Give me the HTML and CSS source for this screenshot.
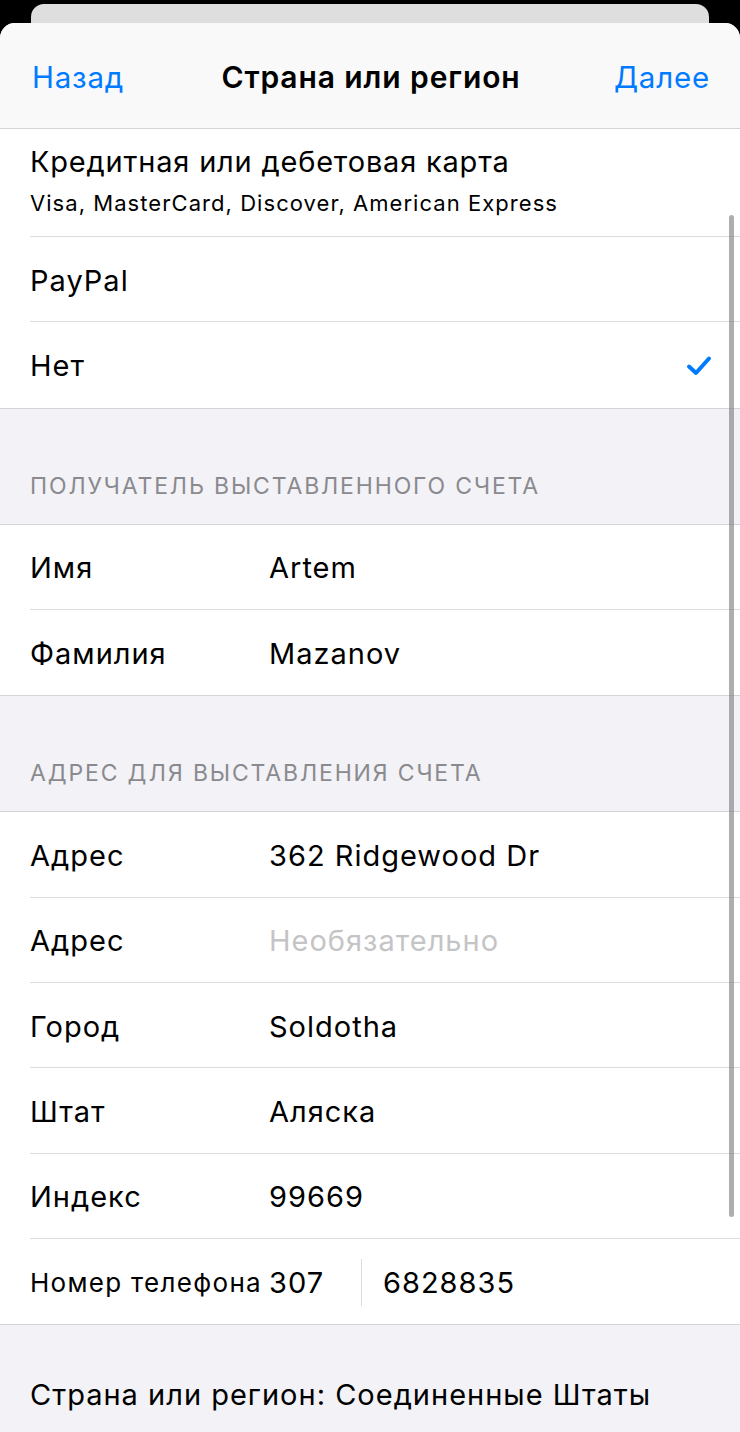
FILE: index.html
```html
<!DOCTYPE html>
<html lang="ru">
<head>
<meta charset="utf-8">
<title>Страна или регион</title>
<link rel="stylesheet" href="styles.css">
</head>
<body>
<div class="screen">
  <div class="back-sheet"></div>
  <div class="sheet">
    <header class="nav">
      <span class="nav-btn">Назад</span>
      <span class="nav-title">Страна или регион</span>
      <span class="nav-btn">Далее</span>
    </header>
    <div class="content">
      <section class="group first">
        <div class="row tall">
          <div class="row-main">
            <div class="row-title">Кредитная или дебетовая карта</div>
            <div class="row-sub">Visa, MasterCard, Discover, American Express</div>
          </div>
        </div>
        <div class="row"><span class="label">PayPal</span></div>
        <div class="row last">
          <span class="label">Нет</span>
          <svg class="check" width="26" height="22" viewBox="0 0 26 22"><path d="M3 11.5 L10 18 L23 3.5" fill="none" stroke="#007aff" stroke-width="4" stroke-linecap="round" stroke-linejoin="round"/></svg>
        </div>
      </section>
      <div class="section-head">ПОЛУЧАТЕЛЬ ВЫСТАВЛЕННОГО СЧЕТА</div>
      <section class="group">
        <div class="row"><span class="label field">Имя</span><span class="value">Artem</span></div>
        <div class="row last"><span class="label field">Фамилия</span><span class="value">Mazanov</span></div>
      </section>
      <div class="section-head">АДРЕС ДЛЯ ВЫСТАВЛЕНИЯ СЧЕТА</div>
      <section class="group">
        <div class="row"><span class="label field">Адрес</span><span class="value">362 Ridgewood Dr</span></div>
        <div class="row"><span class="label field">Адрес</span><span class="value placeholder">Необязательно</span></div>
        <div class="row"><span class="label field">Город</span><span class="value">Soldotha</span></div>
        <div class="row"><span class="label field">Штат</span><span class="value">Аляска</span></div>
        <div class="row"><span class="label field">Индекс</span><span class="value">99669</span></div>
        <div class="row last">
          <span class="label field small">Номер телефона</span>
          <span class="value code">307</span>
          <span class="vdivider"></span>
          <span class="value">6828835</span>
        </div>
      </section>
      <div class="footer-text">Страна или регион: Соединенные Штаты</div>
      <div class="scrollbar"></div>
    </div>
  </div>
</div>
</body>
</html>
```

FILE: styles.css
```css
* { box-sizing: border-box; }
html, body {
  margin: 0;
  padding: 0;
  background: #000;
}
body {
  width: 740px;
  height: 1432px;
  overflow: hidden;
  font-family: Inter, Roboto, "Liberation Sans", sans-serif;
  color: #000;
}
.screen {
  display: flex;
  flex-direction: column;
  height: 1432px;
  padding-top: 4px;
}
.back-sheet {
  height: 19px;
  margin: 0 31px;
  background: #dedede;
  border-radius: 13px 13px 0 0;
  flex: none;
}
.sheet {
  flex: 1;
  background: #f2f2f7;
  border-radius: 15px 15px 0 0;
  overflow: hidden;
  display: flex;
  flex-direction: column;
}
.nav {
  height: 106px;
  flex: none;
  background: #f9f9f9;
  border-bottom: 1px solid #d4d4d6;
  display: flex;
  align-items: center;
  justify-content: space-between;
  padding: 2px 30px 0 32px;
}
.nav-btn {
  color: #007aff;
  font-size: 29.5px;
  letter-spacing: 0.8px;
}
.nav-title {
  font-weight: 600;
  font-size: 30px;
  letter-spacing: 0.9px;
  margin-left: 4px;
}
.content {
  position: relative;
  flex: 1;
}
.group {
  background: #fff;
  border-top: 1px solid #d4d4d6;
  border-bottom: 1px solid #d4d4d6;
}
.group.first { border-top: none; }
.row {
  height: 85.33px;
  margin-left: 30px;
  padding-right: 30px;
  padding-top: 2px;
  display: flex;
  align-items: center;
  border-bottom: 1px solid #dcdcde;
  font-size: 29px;
  letter-spacing: 1px;
}
.row.last { border-bottom: none; }
.row.tall { height: 108px; align-items: flex-start; padding-top: 15px; }
.row-title { font-size: 29px; line-height: 36px; letter-spacing: 0.8px; }
.row-sub { font-size: 22px; line-height: 30px; margin-top: 8px; letter-spacing: 1.05px; }
.label { flex: none; }
.field { width: 239px; }
.field.small { font-size: 26px; letter-spacing: 1.3px; }
.value { flex: none; }
.placeholder { color: #c4c4c6; }
.code { width: 92px; }
.vdivider {
  width: 1px;
  height: 47px;
  background: #dcdcde;
  margin-right: 21px;
}
.check { margin-left: auto; margin-right: -2px; }
.section-head {
  height: 115px;
  padding: 0 30px 24px;
  display: flex;
  align-items: flex-end;
  color: #8a8a8e;
  font-size: 23px;
  letter-spacing: 1.85px;
}
.footer-text {
  padding: 52px 30px 0;
  font-size: 29px;
  letter-spacing: 1px;
}
.scrollbar {
  position: absolute;
  right: 6px;
  top: 86px;
  width: 5px;
  height: 1002px;
  border-radius: 3px;
  background: rgba(120, 120, 120, 0.6);
}
```
